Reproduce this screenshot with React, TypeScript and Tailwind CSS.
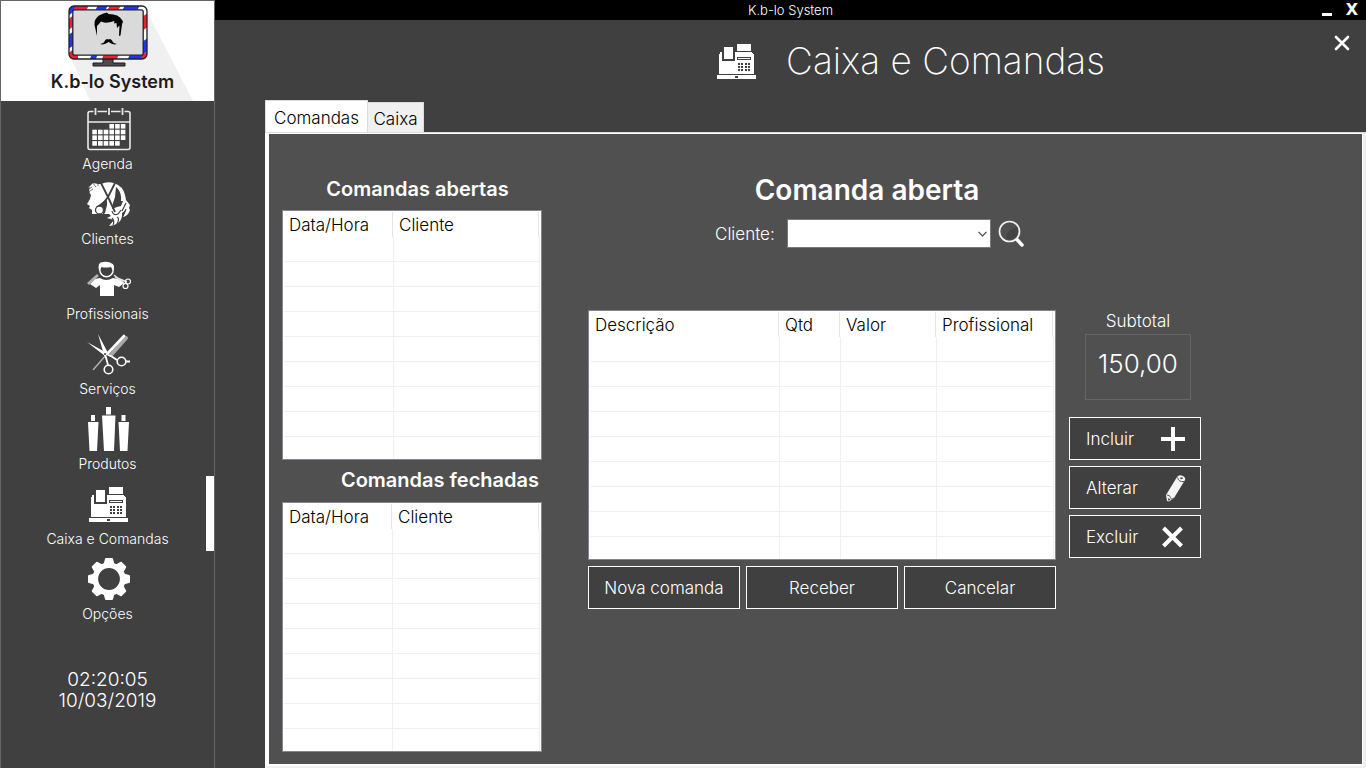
import type { ReactNode } from "react";

function Logo() {
  return (
    <svg viewBox="0 0 213 100" className="absolute inset-0 h-full w-full" aria-hidden="true">
      <defs>
        <clipPath id="frame">
          <rect x="68" y="5" width="78" height="53" rx="5" />
        </clipPath>
      </defs>
      <path d="M70 57 89 100H192L145 9Z" fill="#f0f0f0" />
      <path d="M102 57h10v5h12v3H92v-3h10z" fill="#4b4b4b" stroke="#1c1c1c" strokeWidth="1" />
      <g clipPath="url(#frame)">
        <rect x="68" y="5" width="78" height="53" fill="#fff" />
        <path d="M66 3H76L72 11 66 16zM97 4H107L104 10H94zM124 4H139L136 10H121zM66 35 73 30V44L66 49zM88 60 91 53H97L94 60zM126 60 129 53H143L140 60zM141 41 148 36V49L141 54z" fill="#1f35f0" />
        <path d="M75 4H88L85 10H72zM109 4H120L117 10H106zM66 19 73 14V25L66 30zM66 53 73 48 77 53V60H66zM100 60 103 53H118L115 60zM141 54 148 49V60H140zM141 16 148 11V25L141 30z" fill="#f0202c" />
      </g>
      <rect x="68" y="5" width="78" height="53" rx="5" fill="none" stroke="#20202c" strokeWidth="1.300" />
      <rect x="71.800" y="8.800" width="70.400" height="45.400" rx="2" fill="#dadada" stroke="#20202c" strokeWidth="1.300" />
      <path d="M96 35 93.500 24Q93 18 98 14.500 103 12 106 11.500L107.500 13Q118 13 121 19L122 20.500 121 23.500 119.500 34.500 118 35 118.500 24.500 116 27 115.500 22 113 22.500 113.500 20Q104 23 100 20.500L97.500 23.500 96 25z" fill="#050505" />
      <path d="M99 43Q103 42.500 104 39.500 105.500 37 107.500 38.500 109.500 37 111 39.500 112 42.500 116 43 112 44.500 107.500 41 103 44.500 99 43z" fill="#050505" />
    </svg>
  );
}

function RegisterIcon({ className }: { className: string }) {
  return (
    <svg viewBox="0 0 39 35" className={className} fill="#fff" shapeRendering="crispEdges" aria-hidden="true">
      <path d="M20 0h14v7H20z" />
      <path d="M7 3h9v12H7z" />
      <path d="M2 10l1-1V8h2v9h13V8h17v1l2 1v20H2zM20 13v3h14v-3z" fillRule="evenodd" />
      <path d="M21 14h12v1H21z" />
      <path d="M0 31h39v4H0z" />
      <path d="M18 32h3v2h-3zM21 19h2v2h-2zM24 19h2v2h-2zM28 19h2v2h-2zM31 19h2v2h-2zM21 22h2v2h-2zM24 22h2v2h-2zM28 22h2v2h-2zM31 22h2v2h-2zM21 25h2v2h-2zM24 25h2v2h-2zM28 25h2v2h-2zM31 25h2v2h-2z" fill="#404040" />
    </svg>
  );
}

const iconClass = "h-11 w-11";

function CalendarIcon() {
  const rows = [
    [3, 4, 5],
    [0, 1, 2, 3, 4, 5],
    [0, 1, 2, 3, 4, 5],
    [0, 1, 2, 3, 4],
  ];
  return (
    <svg viewBox="0 0 44 44" className={iconClass} fill="none" aria-hidden="true">
      <path d="M6.500 4.500H3q-2 0-2 2v34q0 2 2 2h38q2 0 2-2v-34q0-2-2-2h-3.500M10.500 4.500h9.500M24 4.500h9.500M1 15h42" stroke="#e9eceb" strokeWidth="1.600" />
      <path d="M8.500 1v7M22 1v7M35.500 1v7" stroke="#dfe3e2" strokeWidth="1.800" />
      {rows.map((cols, r) =>
        cols.map((c) => <rect key={`${r}-${c}`} x={5.3 + c * 5.7} y={17 + r * 5.7} width="4.600" height="4.600" fill="#fff" />),
      )}
    </svg>
  );
}

function ClientsIcon() {
  return (
    <svg viewBox="0 0 44 44" className={iconClass} fill="none" aria-hidden="true">
      <path d="M4 13Q1 9 3 5L1 6 4 3 6 1 11 2 14 2Q20-1 27 1 36 4 38 13L39 18 43 23 42 26 43 28Q41 34 36 35L39 28 35 31Q36 42 22 44L27 38 20 36 24 34 22 32H5L5 28 2 26 3 24 0 22 3 17z" fill="#fff" />
      <path d="M0 8 5 5M0 11 6 7M5 0 9 5M11 0 11 4" stroke="#404040" strokeWidth=".7" />
      <path d="M14 1 21 15 28 30M28 1 21 15 14 24" stroke="#404040" strokeWidth="1.800" />
      <path d="M29 5Q35 10 34 19L36 19 34 24 30 25 25 27 26 21 28 15z" fill="#404040" />
      <path d="M9 25 17 19 20 18 20 23 18 31 16 33 16 25z" fill="#404040" />
      <circle cx="12.500" cy="28" r="4" stroke="#404040" strokeWidth="1.300" fill="#fff" />
      <path d="M25 29q1 5 6 3l3-4M35 29l4-8M36 34l3-7M25 36q3 3 1 7M30 35q3 1 0 7" stroke="#404040" strokeWidth="1.200" />
    </svg>
  );
}

function ProfessionalIcon() {
  return (
    <svg viewBox="0 0 44 44" className={iconClass} fill="none" aria-hidden="true">
      <path d="M13 21Q19 25 26 21L31 22 37 26 32 30 27 28V39H13V28L9 31 3 27 8 22z" fill="#fff" />
      <path d="M12 14Q10 5 16 5 20 4 24 6 29 8 26 14L24 10Q19 11 14 10z" fill="#fff" />
      <circle cx="19.500" cy="13" r="6.700" fill="#404040" fillOpacity="0" stroke="#fff" strokeWidth="1.400" />
      <path d="M1 27 11 18" stroke="#b0b0b0" strokeWidth="3" />
      <path d="M27 18 38 27M28 20 40 25" stroke="#e8e8e8" strokeWidth="1.400" />
      <circle cx="41" cy="24.500" r="2.500" stroke="#fff" strokeWidth="1.200" />
      <circle cx="38.500" cy="29" r="2.500" stroke="#fff" strokeWidth="1.200" />
    </svg>
  );
}

function ServicesIcon() {
  return (
    <svg viewBox="0 0 44 44" className={iconClass} fill="none" aria-hidden="true">
      <path d="M24 23 39 6" stroke="#a8a8a8" strokeWidth="4" strokeLinecap="round" />
      <path d="M21 21 37 4" stroke="#fff" strokeWidth="2.600" strokeLinecap="round" />
      <path d="M6 38 19 23" stroke="#b4b4b4" strokeWidth="1.400" />
      <path d="M0 10 20 21 18 24zM11 2 21 21 17 23z" fill="#fff" />
      <path d="M18 22 21 33M19 22Q25 24 30 28M39 29.500h4" stroke="#fff" strokeWidth="1.800" />
      <circle cx="21.500" cy="37.500" r="4.300" stroke="#fff" strokeWidth="1.600" />
      <circle cx="34.500" cy="29.500" r="4.300" stroke="#fff" strokeWidth="1.600" />
      <circle cx="18" cy="22" r="1" fill="#404040" />
    </svg>
  );
}

function ProductsIcon() {
  return (
    <svg viewBox="0 0 44 44" className={iconClass} fill="#fff" aria-hidden="true">
      <path d="M4 8h4v6H4zM19 0h5v7.500h-5zM34.500 8h4v6h-4zM1 15h10.500L10 44H2.500zM15 8.500h13.500L27 44H17zM31.500 15H42l-1.500 29H33z" />
    </svg>
  );
}

function GearIcon() {
  return (
    <svg viewBox="-22 -22 44 44" className={iconClass} aria-hidden="true">
      <circle r="13.700" fill="none" stroke="#fff" strokeWidth="5.600" />
      {[0, 45, 90, 135, 180, 225, 270, 315].map((angle) => (
        <path key={angle} d="M-6-13-4-20Q-4-21-3-21H3Q4-21 4-20L6-13z" fill="#fff" transform={`rotate(${angle})`} />
      ))}
    </svg>
  );
}

type NavItem = { label: string; icon: ReactNode; active?: boolean };

const navItems: NavItem[] = [
  { label: "Agenda", icon: <CalendarIcon /> },
  { label: "Clientes", icon: <ClientsIcon /> },
  { label: "Profissionais", icon: <ProfessionalIcon /> },
  { label: "Serviços", icon: <ServicesIcon /> },
  { label: "Produtos", icon: <ProductsIcon /> },
  { label: "Caixa e Comandas", icon: <RegisterIcon className="h-[35px] w-[39px]" />, active: true },
  { label: "Opções", icon: <GearIcon /> },
];

type Column = { title: string; width: string };

function Grid({ label, columns }: { label: string; columns: Column[] }) {
  return (
    <div className="h-[250px] overflow-hidden border border-[#828790] bg-white p-px">
      <table aria-label={label} className="w-full table-fixed border-separate border-spacing-0 text-black">
        <colgroup>
          {columns.map((c) => (
            <col key={c.title} className={c.width} />
          ))}
        </colgroup>
        <thead>
          <tr>
            {columns.map((c) => (
              <th key={c.title} className="h-[25px] p-0 pr-px text-left text-[17px] leading-[23px] font-light">
                <div className="border-r border-[#e5e5e5] pt-0.5 pl-[5px]">{c.title}</div>
              </th>
            ))}
          </tr>
        </thead>
        <tbody>
          {Array.from({ length: 9 }, (_, r) => (
            <tr key={r}>
              {columns.map((c) => (
                <td key={c.title} className="h-[25px] border-r border-b border-[#f0f0f0] p-0" />
              ))}
            </tr>
          ))}
        </tbody>
      </table>
    </div>
  );
}

function ActionButton({ label, icon }: { label: string; icon: ReactNode }) {
  return (
    <button className="flex h-[43px] items-center justify-between border border-white bg-[#404040] pr-[14px] pl-4 text-[17px] leading-6 font-light">
      {label}
      {icon}
    </button>
  );
}

export default function App() {
  return (
    <div className="flex min-h-screen bg-[#404040] font-['Century_Gothic','Inter',sans-serif] font-light text-white">
      <aside className="flex w-[215px] shrink-0 flex-col border border-b-0 border-[#666]">
        <div className="relative flex h-[100px] items-end justify-center bg-white pb-[7px]">
          <Logo />
          <span className="relative pl-2.5 text-lg leading-6 font-semibold text-[#1c1c1c]">K.b-lo System</span>
        </div>
        <nav className="flex flex-col">
          {navItems.map((item) => (
            <a
              key={item.label}
              href="#"
              className={`flex h-[75px] flex-col items-center border-r-8 pt-1.5 pl-2 ${item.active ? "border-white" : "border-transparent"}`}
            >
              <span className="ml-0.5 flex h-11 items-center">{item.icon}</span>
              <span className="mt-0.5 text-sm leading-[22px]">{item.label}</span>
            </a>
          ))}
        </nav>
        <div className="mt-[43px] text-center text-[19px] leading-[21px]">
          <div>02:20:05</div>
          <div>10/03/2019</div>
        </div>
      </aside>

      <main className="flex min-w-0 flex-1 flex-col">
        <div className="grid h-5 grid-cols-[1fr_auto_1fr] items-center bg-black">
          <span className="col-start-2 text-[13px] leading-5">K.b-lo System</span>
          <div className="flex h-5 justify-end gap-3 pr-1.5">
            <button aria-label="Minimizar" className="flex items-end pb-1">
              <span className="h-[3px] w-[10px] bg-white" />
            </button>
            <button className="w-4 font-['DejaVu_Sans',sans-serif] text-base leading-5 font-bold">X</button>
          </div>
        </div>

        <header className="flex h-20 items-start">
          <div className="flex flex-1 items-center justify-center pt-[7px] pb-1 pl-[273px]">
            <RegisterIcon className="mr-[30px] h-[35px] w-[39px]" />
            <h1 className="text-[37px] leading-[68px] font-extralight">Caixa e Comandas</h1>
          </div>
          <button aria-label="Fechar" className="mt-3.5 mr-4 flex h-[18px] w-4 items-center justify-center">
            <svg viewBox="0 0 16 16" className="h-4 w-4" aria-hidden="true">
              <path d="M2 2 14 14M14 2 2 14" stroke="#fff" strokeWidth="2.600" strokeLinecap="round" />
            </svg>
          </button>
        </header>

        <div className="flex flex-1 flex-col pl-[50px]">
          <div role="tablist" className="flex h-8 items-end text-[17px] text-black">
            <button role="tab" aria-selected="true" className="h-8 w-[103px] border border-b-0 border-[#dcdcdc] bg-white pt-0.5 leading-6 font-light">
              Comandas
            </button>
            <button role="tab" aria-selected="false" className="h-[30px] w-14 border border-b-0 border-l-0 border-[#dcdcdc] bg-[#f0f0f0] pt-0.5 leading-6 font-light">
              Caixa
            </button>
          </div>
          <div className="flex flex-1 border-t border-[#dcdcdc] bg-[#f0f0f0] pr-[3px] pb-[2px]">
            <div className="flex flex-1 items-start border-t border-r border-b-2 border-l-4 border-white bg-[#505050] pt-10 pr-4 pb-3 pl-[13px]">
              <div className="flex w-[260px] shrink-0 flex-col">
                <h2 className="mb-1.5 pl-[11px] text-center text-xl leading-[30px] font-semibold">Comandas abertas</h2>
                <Grid
                  label="Comandas abertas"
                  columns={[
                    { title: "Data/Hora", width: "w-[110px]" },
                    { title: "Cliente", width: "w-[146px]" },
                  ]}
                />
                <h2 className="mt-[5px] mb-[7px] pr-[3px] text-right text-xl leading-[30px] font-semibold">Comandas fechadas</h2>
                <Grid
                  label="Comandas fechadas"
                  columns={[
                    { title: "Data/Hora", width: "w-[109px]" },
                    { title: "Cliente", width: "w-[147px]" },
                  ]}
                />
              </div>

              <div className="ml-[46px] flex w-[468px] shrink-0 flex-col">
                <h2 className="pl-[90px] text-center text-[28px] leading-8 font-semibold">Comanda aberta</h2>
                <div className="mt-3 mb-[61px] flex h-[31px] items-center pl-[127px]">
                  <label htmlFor="cliente" className="w-[72px] text-[17px] leading-6">
                    Cliente:
                  </label>
                  <div className="relative w-[204px]">
                    <select id="cliente" className="block h-[29px] w-full appearance-none border border-[#7a7a7a] bg-white px-2 text-[17px] text-black" />
                    <svg viewBox="0 0 9 6" className="pointer-events-none absolute top-3 right-1 h-1.5 w-[9px]" aria-hidden="true">
                      <path d="M.5.8 4.500 4.800 8.500.8" fill="none" stroke="#444" strokeWidth="1.200" />
                    </svg>
                  </div>
                  <button aria-label="Pesquisar" className="ml-1.5">
                    <svg viewBox="0 0 28 28" className="h-7 w-7" fill="none" aria-hidden="true">
                      <path d="M19 18.500 25 25" stroke="#fff" strokeWidth="3.500" strokeLinecap="round" />
                      <circle cx="12.500" cy="11.500" r="10" fill="#505050" stroke="#f2f2f2" strokeWidth="1.700" />
                      <path d="M9 18Q10 9 20 7 23 13 17 18 12 21 9 18z" fill="#444" />
                    </svg>
                  </button>
                </div>
                <Grid
                  label="Itens da comanda"
                  columns={[
                    { title: "Descrição", width: "w-[190px]" },
                    { title: "Qtd", width: "w-[61px]" },
                    { title: "Valor", width: "w-[96px]" },
                    { title: "Profissional", width: "w-[117px]" },
                  ]}
                />
                <div className="mt-1.5 grid grid-cols-3 gap-1.5">
                  {["Nova comanda", "Receber", "Cancelar"].map((label) => (
                    <button key={label} className="h-[43px] border border-white bg-[#404040] text-[17px] leading-6 font-light">
                      {label}
                    </button>
                  ))}
                </div>
              </div>

              <div className="ml-[13px] flex w-[132px] shrink-0 flex-col gap-1.5 pt-[135px]">
                <div className="mb-[11px] flex flex-col items-center pl-1.5">
                  <span className="text-[17px] leading-[25px]">Subtotal</span>
                  <output className="h-[66px] w-[106px] border border-[#666] text-center text-[26px] leading-[58px]">150,00</output>
                </div>
                <ActionButton
                  label="Incluir"
                  icon={
                    <svg viewBox="0 0 26 26" className="h-[26px] w-[26px]" aria-hidden="true">
                      <path d="M11 1h4v10h10v4H15v10h-4V15H1v-4h10z" fill="#fff" />
                    </svg>
                  }
                />
                <ActionButton
                  label="Alterar"
                  icon={
                    <svg viewBox="0 0 26 28" className="h-7 w-[26px]" aria-hidden="true">
                      <path d="M6 21 17 3Q19 0 23 2 26 4 25 6L14 24 9 27.500 7 27z" fill="#f4f4f4" />
                      <path d="M17.500 3.500q1.500 5 6.500 4M7 21q3 0 3.500 2.500t3.500.5" fill="none" stroke="#555" strokeWidth="1" />
                      <ellipse cx="21.500" cy="4.200" rx="1.400" ry="1" fill="#555" />
                      <path d="M8 24 10.500 25.500 8.500 27z" fill="#404040" />
                    </svg>
                  }
                />
                <ActionButton
                  label="Excluir"
                  icon={
                    <svg viewBox="0 0 26 26" className="h-[26px] w-[26px]" aria-hidden="true">
                      <path d="M3.500 4 21.500 22M21.500 4 3.500 22" stroke="#fff" strokeWidth="4" />
                    </svg>
                  }
                />
              </div>
            </div>
          </div>
        </div>
      </main>
    </div>
  );
}
